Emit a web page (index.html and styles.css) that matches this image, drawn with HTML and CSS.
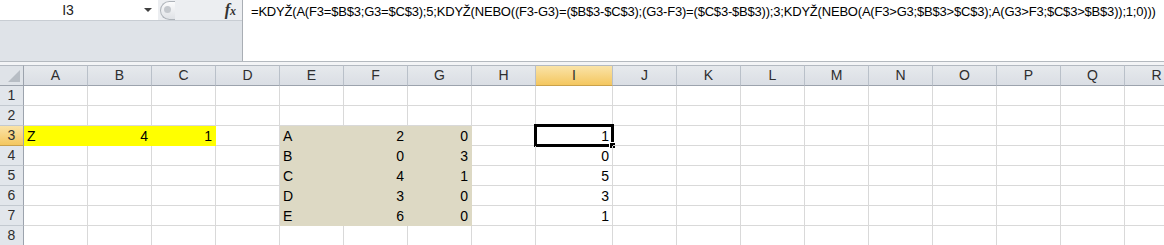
FILE: index.html
```html
<!DOCTYPE html>
<html lang="cs">

<head>
    <meta charset="utf-8">
    <title>Sešit1</title>
    <link rel="stylesheet" href="styles.css">
</head>

<body>
    <header class="formula-bar">
        <div class="left-pane">
            <div class="name-row">
                <div class="name-box">
                    <span class="name">I3</span>
                    <span class="drop"></span>
                </div>
                <div class="knob"><span class="dot"></span></div>
                <div class="fx"><i>f</i><i class="x">x</i></div>
            </div>
        </div>
        <div class="formula">=KDYŽ(A(F3=$B$3;G3=$C$3);5;KDYŽ(NEBO((F3-G3)=($B$3-$C$3);(G3-F3)=($C$3-$B$3));3;KDYŽ(NEBO(A(F3&gt;G3;$B$3&gt;$C$3);A(G3&gt;F3;$C$3&gt;$B$3));1;0)))</div>
    </header>
    <div class="strip"></div>

    <main class="sheet" id="sheet"></main>

    <script>
        let cols = ["A", "B", "C", "D", "E", "F", "G", "H", "I", "J", "K", "L", "M", "N", "O", "P", "Q", "R"];

        // hodnoty: [text, barva, zarovnani]
        let data = {
            3: { A: ["Z", "yellow", "txt"], B: ["4", "yellow"], C: ["1", "yellow"], E: ["A", "tan", "txt"], F: ["2", "tan"], G: ["0", "tan"], I: ["1"] },
            4: { E: ["B", "tan", "txt"], F: ["0", "tan"], G: ["3", "tan"], I: ["0"] },
            5: { E: ["C", "tan", "txt"], F: ["4", "tan"], G: ["1", "tan"], I: ["5"] },
            6: { E: ["D", "tan", "txt"], F: ["3", "tan"], G: ["0", "tan"], I: ["3"] },
            7: { E: ["E", "tan", "txt"], F: ["6", "tan"], G: ["0", "tan"], I: ["1"] }
        };

        let sheet = document.querySelector("#sheet");

        let corner = document.createElement("div");
        corner.className = "corner";
        sheet.appendChild(corner);

        cols.forEach((c) => {
            let h = document.createElement("div");
            h.className = c == "I" ? "col-head active" : "col-head";
            h.textContent = c;
            sheet.appendChild(h);
        });

        for (let r = 1; r <= 8; r++) {
            let rh = document.createElement("div");
            rh.className = r == 3 ? "row-head active" : "row-head";
            rh.textContent = r;
            sheet.appendChild(rh);

            cols.forEach((c) => {
                let cell = document.createElement("div");
                cell.className = "cell";
                let v = data[r] && data[r][c];
                if (v) {
                    cell.textContent = v[0];
                    cell.classList.add(v[2] || "num");
                    if (v[1]) cell.classList.add(v[1]);
                }
                if (r == 3 && c == "I") {
                    let sel = document.createElement("span");
                    sel.className = "selection";
                    cell.appendChild(sel);
                }
                sheet.appendChild(cell);
            });
        }
    </script>
</body>

</html>
```

FILE: styles.css
```css
body {
    margin: 0;
    width: 1164px;
    height: 245px;
    overflow: hidden;
    background-color: #ffffff;
    font-family: "Liberation Sans", Arial, sans-serif;
    font-size: 14px;
    color: #000000;
}

/* radek vzorcu */
.formula-bar {
    display: flex;
    height: 62px;
    box-sizing: border-box;
    border-bottom: 1px solid #b4b9bf;
    background-color: #dfe3e8;
}

.left-pane {
    flex-shrink: 0;
    width: 242px;
    border-right: 1px solid #a9aeb4;
}

.name-row {
    display: flex;
    align-items: center;
    height: 21px;
    box-sizing: border-box;
    border-bottom: 1px solid #c8cdd3;
    background-color: #eceef1;
}

.name-box {
    display: flex;
    align-items: center;
    width: 158px;
    height: 100%;
    background-color: #ffffff;
}

.name {
    width: 136px;
    text-align: center;
    color: #222222;
}

.drop {
    margin-left: 8px;
    width: 0;
    height: 0;
    border-left: 4px solid transparent;
    border-right: 4px solid transparent;
    border-top: 4px solid #404040;
}

.knob {
    position: relative;
    width: 15px;
    height: 19px;
    margin-left: 2px;
    box-sizing: border-box;
    border: 1px solid #aeb3b9;
    border-right: none;
    border-radius: 10px 0 0 10px;
    background: linear-gradient(#fbfbfc, #dfe2e6);
}

.dot {
    position: absolute;
    top: 4px;
    left: 3px;
    width: 7px;
    height: 7px;
    border-radius: 50%;
    background-color: #c4c8cd;
}

.fx {
    margin-left: auto;
    padding-right: 6px;
    font-family: "Liberation Serif", serif;
    font-weight: bold;
    font-size: 16px;
    color: #333333;
}

.fx .x {
    font-size: 12px;
}

.formula {
    flex: 1;
    min-width: 0;
    padding: 3px 0 0 8px;
    background-color: #ffffff;
    white-space: nowrap;
    overflow: hidden;
    line-height: 18px;
    font-size: 13px;
    letter-spacing: -0.2px;
}

.strip {
    height: 3px;
    background-color: #f3f4f6;
}

/* list */
.sheet {
    display: grid;
    grid-template-columns: 24px repeat(8, 64px) 77px repeat(9, 64px);
    grid-template-rows: 21px repeat(8, 20px);
}

.corner,
.col-head,
.row-head,
.cell {
    box-sizing: border-box;
    border-right: 1px solid #d9d9d9;
    border-bottom: 1px solid #d9d9d9;
}

.corner {
    position: relative;
    border-top: 1px solid #b3b9c1;
    border-right-color: #9ca3ad;
    border-bottom-color: #9ca3ad;
    background-color: #dfe3e8;
}

.corner::after {
    content: "";
    position: absolute;
    right: 3px;
    bottom: 3px;
    border-left: 12px solid transparent;
    border-bottom: 12px solid #b7bdc4;
}

.col-head {
    border-top: 1px solid #b3b9c1;
    border-right-color: #b9c0c9;
    border-bottom-color: #9ca3ad;
    background: linear-gradient(#e6e9ed, #dadee4);
    text-align: center;
    line-height: 19px;
    color: #2e2e2e;
}

.row-head {
    border-right-color: #9ca3ad;
    border-bottom-color: #c3c9d0;
    background-color: #e2e6eb;
    text-align: center;
    line-height: 19px;
    color: #2e2e2e;
}

.col-head.active,
.row-head.active {
    background: linear-gradient(#fae3a8, #f4c75f);
    border-bottom-color: #c9a14a;
}

.cell {
    position: relative;
    padding: 0 3px;
    line-height: 20px;
    white-space: nowrap;
}

.num {
    text-align: right;
}

.txt {
    text-align: left;
}

.yellow {
    background-color: #ffff00;
    border-color: #ffff00;
}

.tan {
    background-color: #ddd9c4;
    border-color: #ddd9c4;
}

.selection {
    position: absolute;
    top: -2px;
    left: -2px;
    right: -2px;
    bottom: -2px;
    border: 3px solid #000000;
}

.selection::after {
    content: "";
    position: absolute;
    right: -5px;
    bottom: -5px;
    width: 5px;
    height: 5px;
    background-color: #000000;
    border: 1px solid #ffffff;
}
```
